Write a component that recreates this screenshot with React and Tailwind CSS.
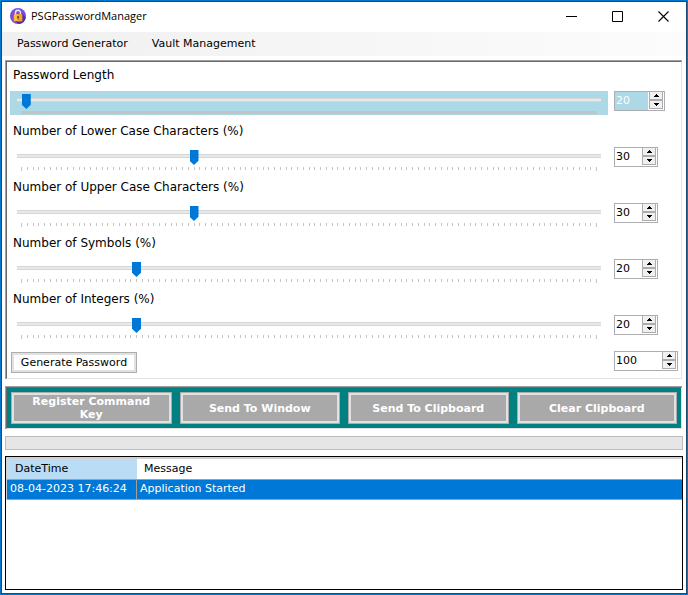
import { useState } from "react";

const BODY_FONT = "font-['DejaVu_Sans',Verdana,sans-serif]";

const SLIDERS = [
  { id: "length", label: "Password Length", start: 20, min: 0, max: 2400, active: true },
  { id: "lower", label: "Number of Lower Case Characters (%)", start: 30, min: 0, max: 100 },
  { id: "upper", label: "Number of Upper Case Characters (%)", start: 30, min: 0, max: 100 },
  { id: "symbols", label: "Number of Symbols (%)", start: 20, min: 0, max: 100 },
  { id: "integers", label: "Number of Integers (%)", start: 20, min: 0, max: 100 },
];

const ACTIONS = ["Register Command Key", "Send To Window", "Send To Clipboard", "Clear Clipboard"];

function AppIcon() {
  return (
    <svg className="size-4" viewBox="0 0 16 16" aria-hidden="true">
      <circle cx="8" cy="8" r="8" fill="#7a4fe0" />
      <path d="M11.200 4.500 15.800 9.500A8 8 0 0 1 8.500 16L4.500 13Z" fill="#4f2fb0" />
      <path d="M5.500 7V4.700a2.500 2.500 0 0 1 5 0V7" fill="none" stroke="#e8ebf2" strokeWidth="1.400" />
      <rect x="3.800" y="6.200" width="8.400" height="7" rx="0.700" fill="#fdbd3a" />
      <path d="M8 6.200h3.500a.7.7 0 0 1 .7.700v5.600a.7.7 0 0 1-.7.700H8Z" fill="#f5a11c" />
      <circle cx="8" cy="8.900" r="1" fill="#5a4040" />
      <rect x="7.600" y="9" width="0.800" height="2.600" fill="#5a4040" />
    </svg>
  );
}

function CaptionButton({ label, children }) {
  return (
    <button type="button" aria-label={label} className="flex h-7 w-[46px] items-center justify-center">
      <svg className="size-[11px]" viewBox="0 0 11 11" fill="none" stroke="#000" aria-hidden="true">
        {children}
      </svg>
    </button>
  );
}

function Ticks({ solid }) {
  if (solid) {
    return <div className="mx-1 mt-[5px] h-[3px] bg-[#c4c4c4]" />;
  }
  return (
    <svg className="mx-1 mt-[5px] h-1 w-[calc(100%-9px)] overflow-visible" shapeRendering="crispEdges" aria-hidden="true">
      {Array.from({ length: 101 }, (_, i) => (
        <rect key={i} x={`${i}%`} y="0" width="1" height={i % 100 === 0 ? 4 : 3} fill="#c4c4c4" />
      ))}
    </svg>
  );
}

function StepButton({ label, up, onClick }) {
  return (
    <button
      type="button"
      aria-label={label}
      onClick={onClick}
      className={`flex flex-1 items-center justify-center border-x border-b border-[#acacac] bg-[#f0f0f0] ${up ? "" : "border-t"}`}
    >
      <svg className="h-[3px] w-[5px]" viewBox="0 0 5 3" shapeRendering="crispEdges" aria-hidden="true">
        <path d={up ? "M2 0h1v1h1v1h1v1H0V2h1V1h1Z" : "M0 0h5v1H4v1H3v1H2V2H1V1H0Z"} fill="#000" />
      </svg>
    </button>
  );
}

function Spinner({ label, value, onChange, width, active }) {
  return (
    <div className={`flex h-5 border border-[#abadb3] ${width} ${active ? "bg-[#add8e6] text-white" : "bg-white text-black"}`}>
      <input
        type="number"
        aria-label={label}
        value={value}
        onChange={(e) => onChange(Number(e.target.value))}
        className="h-[17px] min-w-0 flex-1 bg-transparent pl-px text-[11px] outline-none [appearance:textfield] [&::-webkit-inner-spin-button]:appearance-none"
      />
      <div className="flex w-4 flex-col bg-white px-px pb-px">
        <StepButton label={`Increase ${label}`} up onClick={() => onChange(value + 1)} />
        <StepButton label={`Decrease ${label}`} onClick={() => onChange(value - 1)} />
      </div>
    </div>
  );
}

function SliderRow({ item, value, onChange }) {
  return (
    <div className="flex flex-col gap-1">
      <label htmlFor={item.id} className="pl-[3px] text-[12px] leading-6">
        {item.label}
      </label>
      <div className="flex gap-[6px]">
        <div className={`flex h-6 min-w-0 flex-1 flex-col px-[7px] pt-[3px] ${item.active ? "bg-[#add8e6]" : ""}`}>
          <input
            id={item.id}
            type="range"
            min={item.min}
            max={item.max}
            value={value}
            onChange={(e) => onChange(Number(e.target.value))}
            className="h-3 w-full appearance-none bg-transparent outline-none [&::-webkit-slider-runnable-track]:h-1 [&::-webkit-slider-runnable-track]:border-y [&::-webkit-slider-runnable-track]:border-[#d6d6d6] [&::-webkit-slider-runnable-track]:bg-[#e7eaea] [&::-webkit-slider-thumb]:-mt-[5px] [&::-webkit-slider-thumb]:h-[15px] [&::-webkit-slider-thumb]:w-[9px] [&::-webkit-slider-thumb]:appearance-none [&::-webkit-slider-thumb]:bg-[#0078d7] [&::-webkit-slider-thumb]:[clip-path:polygon(0_0,100%_0,100%_72%,50%_100%,0_72%)]"
          />
          <Ticks solid={item.active} />
        </div>
        <div className="w-16">
          <Spinner
            label={item.label}
            value={value}
            onChange={onChange}
            active={item.active}
            width={item.active ? "w-[51px]" : "w-11"}
          />
        </div>
      </div>
    </div>
  );
}

export default function App() {
  const [values, setValues] = useState(SLIDERS.map((s) => s.start));
  const [total, setTotal] = useState(100);
  const update = (i, v) => setValues(values.map((old, j) => (j === i ? v : old)));

  return (
    <div className={`flex min-h-screen flex-col border border-[#0078d0] bg-white text-[11px] text-black ${BODY_FONT}`}>
      <div className="flex flex-1 flex-col border border-[#1c4a72]">
        <header className="flex h-[30px] items-center pb-[2px] pl-2">
          <AppIcon />
          <h1 className="flex-1 pt-px pl-[5px] font-['Open_Sans','Noto_Sans',sans-serif] text-[11px]">PSGPasswordManager</h1>
          <CaptionButton label="Minimize">
            <path d="M0 5.500h11" />
          </CaptionButton>
          <CaptionButton label="Maximize">
            <path d="M.5.5h10v10H.5Z" />
          </CaptionButton>
          <CaptionButton label="Close">
            <path d="m.5.500 10 10m0-10-10 10" strokeWidth="1.100" />
          </CaptionButton>
        </header>

        <nav className="flex h-6 items-center gap-6 bg-linear-to-r from-[#f0f0f0] to-[#fcfcfc] pt-px pl-[15px]">
          <button type="button">Password Generator</button>
          <button type="button">Vault Management</button>
        </nav>

        <main className="flex flex-1 flex-col px-[3px] pt-1 pb-[3px]">
          <section className="mr-px border-t border-l border-[#a0a0a0]">
            <div className="flex flex-col gap-1 border border-t-[#696969] border-r-[#e3e3e3] border-b-[#e3e3e3] border-l-[#696969] pt-px pr-[3px] pb-[5px] pl-[3px]">
              {SLIDERS.map((s, i) => (
                <SliderRow key={s.id} item={s} value={values[i]} onChange={(v) => update(i, v)} />
              ))}
              <div className="mt-2 flex justify-between pl-px">
                <button type="button" className="mt-px h-[21px] w-[126px] border border-[#adadad] bg-white pt-px shadow-[inset_0_0_0_2px_#e1e1e1]">
                  Generate Password
                </button>
                <Spinner label="Total" value={total} onChange={setTotal} width="w-16" />
              </div>
            </div>
          </section>

          <section className="mt-[7px] mr-px border-t border-l border-[#a0a0a0]">
            <div className="grid grid-cols-4 gap-2 border border-t-[#696969] border-r-[#e3e3e3] border-b-[#e3e3e3] border-l-[#696969] bg-[#008080] p-1">
              {ACTIONS.map((name) => (
                <button
                  key={name}
                  type="button"
                  className="h-8 border border-[#adadad] bg-[#a9a9a9] px-2 leading-[13px] font-bold text-white shadow-[inset_0_0_0_2px_#e1e1e1]"
                >
                  {name}
                </button>
              ))}
            </div>
          </section>

          <div role="progressbar" aria-label="Progress" aria-valuenow={0} className="mt-[7px] h-[14px] border border-[#bcbcbc] bg-[#e6e6e6]" />

          <div className="mt-[6px] flex-1 border border-black">
            <table className="w-full table-fixed border-separate border-spacing-0 border-t-2 border-l border-[#d0d0d0] text-left">
              <colgroup>
                <col className="w-[130px]" />
                <col />
              </colgroup>
              <thead>
                <tr className="h-[21px]">
                  <th className="border-b border-[#a0a0a0] bg-[#badcf4] pl-2 font-normal">DateTime</th>
                  <th className="border-b border-[#a0a0a0] pl-[7px] font-normal">Message</th>
                </tr>
              </thead>
              <tbody>
                <tr className="h-5 bg-[#0078d7] whitespace-nowrap text-white">
                  <td className="border-r border-b border-[#a0a0a0] pl-[3px]">08-04-2023 17:46:24</td>
                  <td className="border-b border-[#a0a0a0] pl-[3px]">Application Started</td>
                </tr>
              </tbody>
            </table>
          </div>
        </main>
      </div>
    </div>
  );
}
